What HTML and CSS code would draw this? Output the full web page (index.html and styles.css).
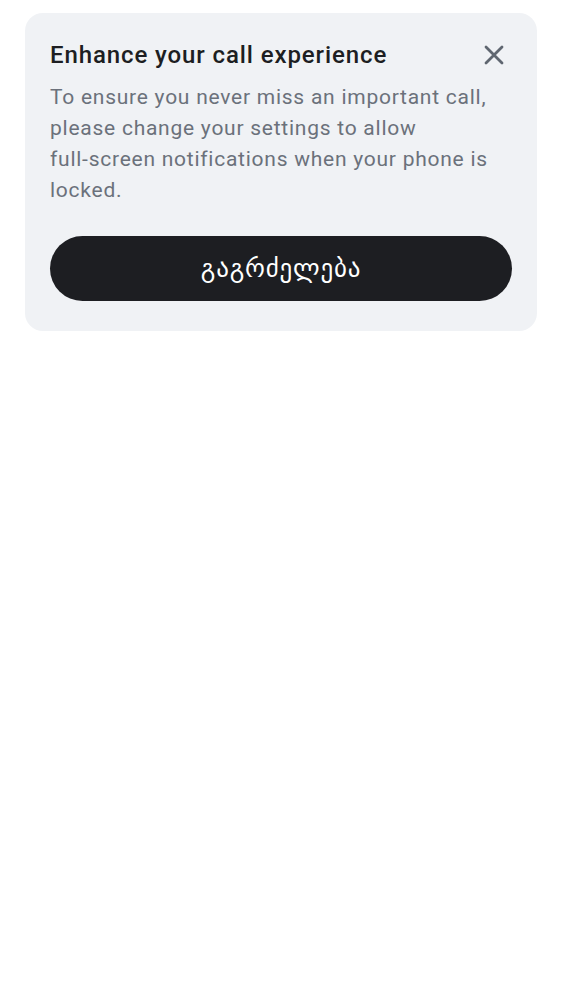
FILE: index.html
```html
<!DOCTYPE html>
<html>
<head>
<meta charset="utf-8">
<link rel="stylesheet" href="styles.css">
</head>
<body>
<div class="card">
  <div class="header">
    <h1 class="title">Enhance your call experience</h1>
    <button class="close" aria-label="Close">
      <svg width="20" height="20" viewBox="0 0 20 20"><path d="M2 2 L18 18 M18 2 L2 18" stroke="#5f6670" stroke-width="2.8" stroke-linecap="round" fill="none"/></svg>
    </button>
  </div>
  <p class="body">To ensure you never miss an important call, please change your settings to allow <span class="nowrap">full-screen</span> notifications when your phone is locked.</p>
  <button class="cta">გაგრძელება</button>
</div>
</body>
</html>
```
FILE: styles.css
```css
html, body {
  margin: 0;
  padding: 0;
  background: #ffffff;
}
body {
  font-family: Roboto, "DejaVu Sans", sans-serif;
}
.card {
  margin: 13px 25px 0 25px;
  background: #f0f2f5;
  border-radius: 18px;
  padding: 25px 25px 30px 25px;
}
.header {
  display: flex;
  align-items: center;
  justify-content: space-between;
}
.title {
  margin: 0;
  font-size: 24px;
  font-weight: 500;
  line-height: 34px;
  letter-spacing: 0.9px;
  color: #1d1e22;
}
.close {
  border: 0;
  background: none;
  padding: 0;
  width: 20px;
  height: 20px;
  margin-right: 8px;
  display: flex;
}
.body {
  margin: 10px 0 0 0;
  font-size: 21px;
  line-height: 31px;
  color: #6b717b;
  letter-spacing: 0.75px;
}
.nowrap {
  white-space: nowrap;
}
.cta {
  display: block;
  width: 100%;
  margin-top: 30px;
  height: 65px;
  border: 0;
  border-radius: 33px;
  background: #1d1e22;
  color: #ffffff;
  font-family: Roboto, "DejaVu Sans", sans-serif;
  font-size: 25px;
  letter-spacing: 0.8px;
}
```
